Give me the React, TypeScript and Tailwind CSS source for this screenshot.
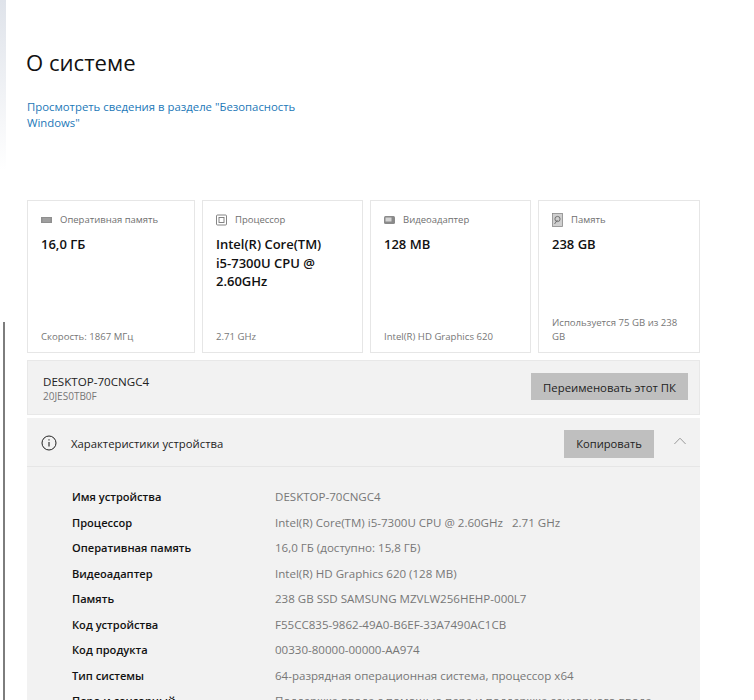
const cards = [
  { k: "ram", label: "Оперативная память", value: "16,0 ГБ", foot: "Скорость: 1867 МГц", w: "w-[168px]" },
  { k: "cpu", label: "Процессор", value: "Intel(R) Core(TM) i5-7300U CPU @ 2.60GHz", foot: "2.71 GHz", w: "w-[161px]" },
  { k: "gpu", label: "Видеоадаптер", value: "128 MB", foot: "Intel(R) HD Graphics 620", w: "w-[161px]" },
  { k: "disk", label: "Память", value: "238 GB", foot: "Используется 75 GB из 238 GB", w: "w-[162px]" },
];

const specs: [string, string][] = [
  ["Имя устройства", "DESKTOP-70CNGC4"],
  ["Процессор", "Intel(R) Core(TM) i5-7300U CPU @ 2.60GHz   2.71 GHz"],
  ["Оперативная память", "16,0 ГБ (доступно: 15,8 ГБ)"],
  ["Видеоадаптер", "Intel(R) HD Graphics 620 (128 MB)"],
  ["Память", "238 GB SSD SAMSUNG MZVLW256HEHP-000L7"],
  ["Код устройства", "F55CC835-9862-49A0-B6EF-33A7490AC1CB"],
  ["Код продукта", "00330-80000-00000-AA974"],
  ["Тип системы", "64-разрядная операционная система, процессор x64"],
  ["Перо и сенсорный", "Поддержка ввода с помощью пера и поддержка сенсорного ввода"],
];

function Icon({ k }: { k: string }) {
  if (k === "ram")
    return (
      <svg width="11" height="12" viewBox="0 0 11 12" className="shrink-0">
        <rect x="0" y="3" width="11" height="6" fill="#8f8f8f" />
        <path d="M1.5 5h8M1.5 7h8" stroke="#bdbdbd" strokeWidth="0.7" />
      </svg>
    );
  if (k === "cpu")
    return (
      <svg width="11" height="12" viewBox="0 0 11 12" fill="none" className="shrink-0" stroke="#777">
        <rect x="0.5" y="1" width="10" height="10" rx="1" strokeWidth="0.9" />
        <rect x="3" y="3.5" width="5" height="5" strokeWidth="0.9" />
      </svg>
    );
  if (k === "gpu")
    return (
      <svg width="11" height="12" viewBox="0 0 11 12" className="shrink-0">
        <rect x="0" y="2" width="11" height="8" rx="1.5" fill="#8a8a8a" />
        <rect x="1.5" y="3.5" width="6" height="4" fill="#d4d4d4" />
      </svg>
    );
  return (
    <svg width="11" height="14" viewBox="0 0 11 14" fill="none" className="shrink-0">
      <rect x="0.5" y="0.5" width="10" height="13" fill="#cfcfcf" stroke="#888" strokeWidth="0.8" />
      <circle cx="5.5" cy="6" r="2.6" stroke="#666" strokeWidth="0.9" />
      <path d="M2.5 11l3-4" stroke="#666" strokeWidth="0.9" />
    </svg>
  );
}

export default function App() {
  return (
    <div className="relative h-[700px] w-[754px] overflow-hidden bg-white font-['Open_Sans','Noto_Sans',sans-serif]">
      <div className="absolute left-0 top-0 h-[170px] w-[6px] bg-gradient-to-b from-[#dfe3ea] to-white" />
      <div className="absolute left-[3px] top-[322px] h-[378px] w-[2px] bg-[#7d7d7d]" />
      <div className="flex w-[727px] flex-col pl-[26px] pt-[47px]">
        <h1 className="text-[22.1px] leading-[30px] font-normal text-[#111]">О системе</h1>
        <a className="mt-[22px] w-[275px] pl-[1px] text-[11.35px] leading-[16px] text-[#1c78b8]">
          Просмотреть сведения в разделе "Безопасность Windows"
        </a>
        <div className="mt-[69px] flex gap-[7px] pl-[1px]">
          {cards.map((c) => (
            <div key={c.k} className={`flex h-[153px] flex-col justify-between border border-[#e6e6e6] pb-[8px] pl-[13px] pr-[10px] pt-[11px] ${c.w}`}>
              <div>
                <div className="flex h-[16px] items-center gap-[8px] text-[9.5px] text-[#6f6f6f]">
                  <Icon k={c.k} />
                  <span>{c.label}</span>
                </div>
                <div className="mt-[7px] pr-[18px] text-[13px] leading-[18.5px] font-[550] text-[#111]">{c.value}</div>
              </div>
              <div className="text-[9.6px] leading-[14px] text-[#777]">{c.foot}</div>
            </div>
          ))}
        </div>
        <div className="mt-[7px] ml-[1px] flex h-[55px] w-[673px] items-center justify-between border border-[#e8e8e8] bg-[#f2f2f2] pl-[15px] pr-[11px]">
          <div className="pt-[2px]">
            <div className="text-[11.6px] leading-[15px] text-[#222]">DESKTOP-70CNGC4</div>
            <div className="text-[10px] leading-[14px] text-[#777]">20JES0TB0F</div>
          </div>
          <div className="mb-[2px] flex h-[27px] w-[157px] items-center justify-center bg-[#bfbfbf] pt-[2px] text-[11.35px] text-[#222]">
            Переименовать этот ПК
          </div>
        </div>
        <div className="mt-[3px] ml-[1px] w-[673px] bg-[#f2f2f2]">
          <div className="flex h-[49px] items-center border-b border-[#e6e6e6] pl-[14px] pr-[14px] pt-[3px]">
            <svg width="16" height="16" viewBox="0 0 16 16" fill="none" stroke="#222" className="mb-[2px] shrink-0">
              <circle cx="8" cy="8" r="7" strokeWidth="1" />
              <path d="M8 7v4.5M8 4.2v1.3" strokeWidth="1.1" />
            </svg>
            <span className="ml-[14px] flex-1 pt-[2px] text-[11.3px] text-[#222]">Характеристики устройства</span>
            <div className="flex h-[28px] w-[90px] items-center justify-center bg-[#bfbfbf] pt-[1px] text-[11.2px] text-[#222]">
              Копировать
            </div>
            <svg width="12" height="8" viewBox="0 0 12 8" fill="none" stroke="#999" className="ml-[20px] mb-[6px] shrink-0">
              <path d="M0.4 7L6 1.2L11.6 7" strokeWidth="1" />
            </svg>
          </div>
          <div className="flex h-[240px] flex-col pl-[45px] pt-[20px]">
            {specs.map(([a, b]) => (
              <div key={a} className="flex h-[25.5px] shrink-0 items-start leading-[19px]">
                <div className="w-[203px] shrink-0 text-[11.1px] font-semibold text-[#111]">{a}</div>
                <div className="whitespace-pre text-[11.55px] text-[#777]">{b}</div>
              </div>
            ))}
          </div>
        </div>
      </div>
    </div>
  );
}
